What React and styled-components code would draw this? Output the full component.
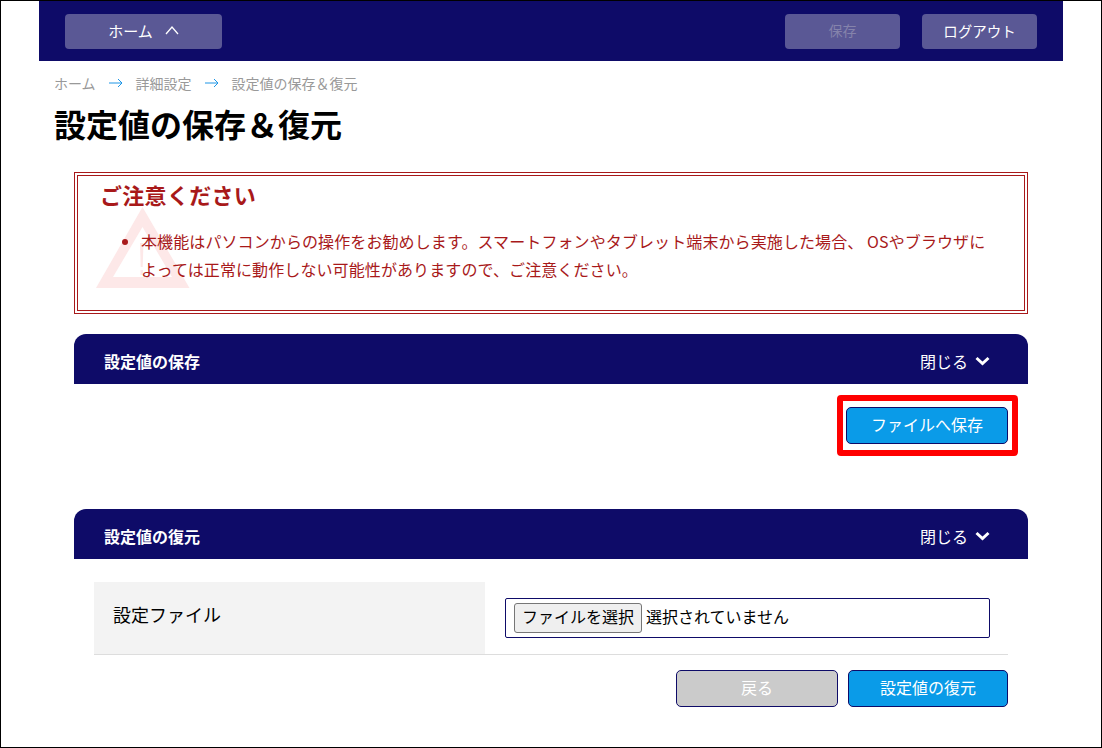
import React from 'react';
import styled, { createGlobalStyle } from 'styled-components';

const GlobalStyle = createGlobalStyle`
	html, body {
		margin: 0;
		padding: 0;
		background: #fff;
	}
	body {
		font-family: "Noto Sans CJK JP", "Noto Sans", sans-serif;
		color: #000;
	}
`;

const Frame = styled.div`
	box-sizing: border-box;
	width: 1102px;
	height: 748px;
	border: 1px solid #000;
	padding-left: 38px;
	overflow: hidden;
`;

const Page = styled.div`
	width: 1024px;
`;

const TopBar = styled.header`
	display: flex;
	align-items: center;
	justify-content: space-between;
	height: 60px;
	padding: 0 26px;
	box-sizing: border-box;
	background: #0e0b68;
`;

const TopGroup = styled.div`
	display: flex;
	gap: 22px;
`;

const TopButton = styled.button`
	display: flex;
	align-items: center;
	justify-content: center;
	gap: 12px;
	width: ${p => p.$width}px;
	height: 35px;
	padding: 0 0 2px;
	border: 0;
	border-radius: 4px;
	background: #5a5895;
	color: ${p => (p.disabled ? '#8583ab' : '#fff')};
	font: inherit;
	font-size: ${p => p.$size || 14.5}px;
`;

const Crumbs = styled.nav`
	display: flex;
	align-items: center;
	gap: 13px;
	height: 20px;
	margin-top: 12px;
	padding-left: 15px;
	font-size: 14px;
	color: #999;
`;

const Title = styled.h1`
	margin: 7px 0 0 15px;
	font-size: 32px;
	line-height: 46px;
	font-weight: 700;
`;

const Content = styled.main`
	width: 954px;
	margin: 26px 0 0 35px;
`;

const Notice = styled.section`
	position: relative;
	box-sizing: border-box;
	height: 142px;
	border: 4px double #a8191a;
	padding: 2px 36px 0 22px;
	color: #a8191a;
`;

const NoticeMark = styled.svg`
	position: absolute;
	left: 18px;
	top: 31px;
`;

const NoticeTitle = styled.h2`
	position: relative;
	margin: 0;
	font-size: 22px;
	line-height: 32px;
	font-weight: 700;
	letter-spacing: 0.3px;
`;

const NoticeList = styled.ul`
	position: relative;
	margin: 17px 0 0;
	padding-left: 41px;
	font-size: 16px;
	line-height: 28px;
	letter-spacing: 0.1px;
`;

const Panel = styled.section`
	margin-top: ${p => p.$top}px;
`;

const PanelHead = styled.div`
	display: flex;
	align-items: center;
	justify-content: space-between;
	height: 50px;
	padding: 3px 38px 0 30px;
	box-sizing: border-box;
	border-radius: 12px 12px 0 0;
	background: #0e0b68;
	color: #fff;
`;

const PanelTitle = styled.h3`
	margin: 0;
	font-size: 16px;
	font-weight: 700;
`;

const Toggle = styled.span`
	display: flex;
	align-items: center;
	gap: 7px;
	font-size: 16px;
`;

const SaveRow = styled.div`
	display: flex;
	justify-content: flex-end;
	padding: 23px 20px 65px 0;
`;

const ActionButton = styled.button`
	position: relative;
	width: ${p => p.$width}px;
	height: 37px;
	padding: 0 0 4px;
	box-sizing: border-box;
	border: 1px solid #0e0b68;
	border-radius: 5px;
	background: ${p => (p.$muted ? '#cbcbcb' : '#0a9be8')};
	color: #fff;
	font: inherit;
	font-size: 16px;
`;

const Highlight = styled.span`
	position: absolute;
	top: -13px;
	bottom: -13px;
	left: -10px;
	right: -11px;
	border: 6px solid #f00;
	border-radius: 4px;
	pointer-events: none;
`;

const FormRow = styled.div`
	display: flex;
	height: 73px;
	margin: 23px 20px 0;
	box-sizing: border-box;
	border-bottom: 1px solid #ddd;
`;

const FormLabel = styled.div`
	display: flex;
	align-items: center;
	width: 391px;
	padding: 0 0 9px 19px;
	box-sizing: border-box;
	background: #f3f3f3;
	font-size: 18px;
`;

const FormField = styled.div`
	display: flex;
	align-items: center;
	padding-left: 20px;
`;

const FileBox = styled.div`
	display: flex;
	align-items: center;
	gap: 4px;
	width: 485px;
	height: 40px;
	padding-left: 8px;
	box-sizing: border-box;
	border: 1px solid #0e0b68;
	border-radius: 2px;
	font-size: 16px;
`;

const FileButton = styled.button`
	width: 128px;
	height: 30px;
	padding: 0 0 4px;
	box-sizing: border-box;
	border: 1px solid #767676;
	border-radius: 3px;
	background: #efefef;
	color: #000;
	font: inherit;
`;

const FileName = styled.span`
	padding-bottom: 4px;
`;

const FormActions = styled.div`
	display: flex;
	justify-content: flex-end;
	gap: 10px;
	margin: 15px 20px 0;
`;

const Arrow = () => (
	<svg width="14" height="10" viewBox="0 0 14 10" fill="none" stroke="#1e96e6" strokeWidth="1">
		<path d="M0 5h13M9 1l4 4-4 4" />
	</svg>
);

const ChevronUp = () => (
	<svg width="14" height="9" viewBox="0 0 14 9" fill="none" stroke="#fff" strokeWidth="1.3">
		<path d="M1 8l6-7 6 7" />
	</svg>
);

const ChevronDown = () => (
	<svg width="15" height="10" viewBox="0 0 15 10" fill="none" stroke="#fff" strokeWidth="3">
		<path d="M1.5 2l6 5.5 6-5.5" />
	</svg>
);

function App() {
	return (
		<Frame>
			<GlobalStyle />
			<Page>
				<TopBar>
					<TopButton $width={157} $size={15}>ホーム <ChevronUp /></TopButton>
					<TopGroup>
						<TopButton $width={115} $size={14} disabled>保存</TopButton>
						<TopButton $width={115}>ログアウト</TopButton>
					</TopGroup>
				</TopBar>
				<Crumbs>
					<span>ホーム</span>
					<Arrow />
					<span>詳細設定</span>
					<Arrow />
					<span>設定値の保存＆復元</span>
				</Crumbs>
				<Title>設定値の保存＆復元</Title>
				<Content>
					<Notice>
						<NoticeMark width="94" height="82" viewBox="0 0 94 82">
							<path fillRule="evenodd" fill="#fde8e8" d="M46.5 0L93.5 81H0ZM46.5 20L17 70H76Z" />
							<path fill="#fde8e8" d="M44 36h3.5l-.8 24h-2ZM44.5 63h2.5v5h-2.5Z" />
						</NoticeMark>
						<NoticeTitle>ご注意ください</NoticeTitle>
						<NoticeList>
							<li>本機能はパソコンからの操作をお勧めします。スマートフォンやタブレット端末から実施した場合、 OSやブラウザによっては正常に動作しない可能性がありますので、ご注意ください。</li>
						</NoticeList>
					</Notice>
					<Panel $top={20}>
						<PanelHead>
							<PanelTitle>設定値の保存</PanelTitle>
							<Toggle>閉じる <ChevronDown /></Toggle>
						</PanelHead>
						<SaveRow>
							<ActionButton $width={162}>
								ファイルへ保存
								<Highlight />
							</ActionButton>
						</SaveRow>
					</Panel>
					<Panel $top={0}>
						<PanelHead>
							<PanelTitle>設定値の復元</PanelTitle>
							<Toggle>閉じる <ChevronDown /></Toggle>
						</PanelHead>
						<FormRow>
							<FormLabel>設定ファイル</FormLabel>
							<FormField>
								<FileBox>
									<FileButton>ファイルを選択</FileButton>
									<FileName>選択されていません</FileName>
								</FileBox>
							</FormField>
						</FormRow>
						<FormActions>
							<ActionButton $width={162} $muted>戻る</ActionButton>
							<ActionButton $width={160}>設定値の復元</ActionButton>
						</FormActions>
					</Panel>
				</Content>
			</Page>
		</Frame>
	);
}

export default App;
